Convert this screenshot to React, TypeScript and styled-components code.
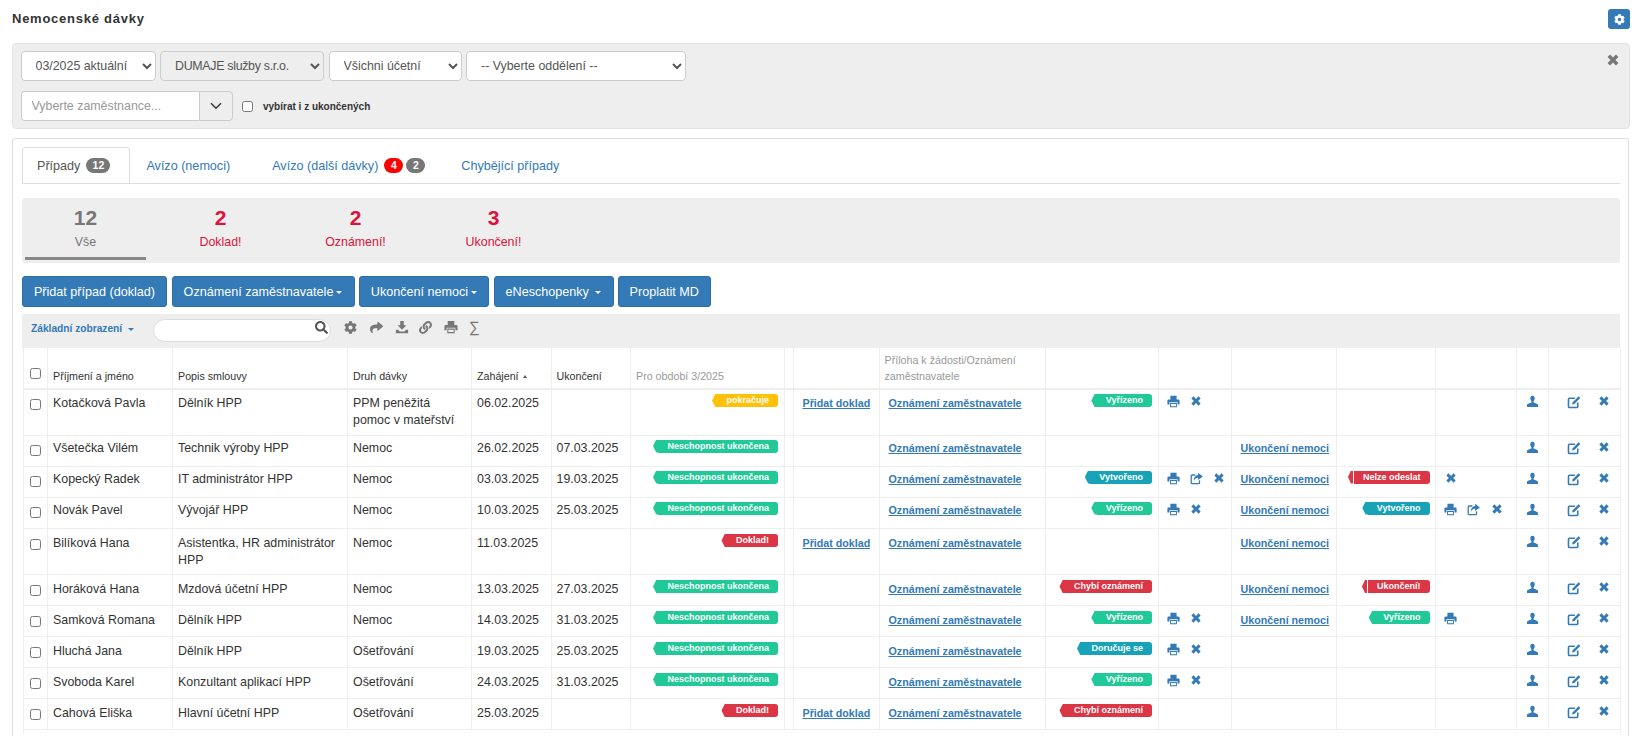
import React from "react";
import styled, { createGlobalStyle } from "styled-components";
import { FaCog, FaLink, FaSearch, FaShare } from "react-icons/fa";

const Global = createGlobalStyle`
  html, body { margin: 0; padding: 0; background: #fff; overflow: hidden; height: 736px; }
  body { font-family: "Liberation Sans", Arial, sans-serif; font-size: 12.4px; color: #333; }
  * { box-sizing: border-box; }
`;

const Page = styled.div`
  padding: 9px 9px 0 12px;
`;
const TitleBar = styled.header`
  display: flex;
  justify-content: space-between;
  height: 20px;
  margin-bottom: 14px;
`;
const Title = styled.h1`
  margin: 0;
  font-size: 13px;
  font-weight: bold;
  line-height: 20px;
  letter-spacing: 0.75px;
`;
const SettingsButton = styled.button`
  width: 22px;
  height: 20px;
  border: 0;
  padding: 0;
  border-radius: 3px;
  background: #337ab7;
  color: #fff;
  display: flex;
  align-items: center;
  justify-content: center;
  font-size: 11px;
`;
const FilterPanel = styled.section`
  position: relative;
  height: 86px;
  padding: 7px 8px 7px 7.5px;
  background: #eee;
  border: 1px solid #e3e3e3;
  border-radius: 4px;
  margin-bottom: 9px;
`;
const FilterRow = styled.div`
  display: flex;
  align-items: center;
  gap: 4.5px;
  height: 30px;
  & + & {
    margin-top: 10px;
  }
`;
const Select = styled.select<{ $w: number }>`
  width: ${(p) => p.$w}px;
  height: 30px;
  padding: 0 10px;
  font: 12.4px "Liberation Sans", Arial, sans-serif;
  color: #555;
  background-color: #fff;
  border: 1px solid #ccc;
  border-radius: 4px;
  &:disabled {
    background-color: #eee;
    opacity: 1;
    letter-spacing: -0.3px;
  }
`;
const Combo = styled.div`
  display: flex;
  width: 212px;
  height: 30px;
`;
const ComboInput = styled.input`
  width: 178px;
  height: 30px;
  padding: 0 10px;
  font: 12.4px "Liberation Sans", Arial, sans-serif;
  color: #555;
  border: 1px solid #ccc;
  border-right: 0;
  border-radius: 4px 0 0 4px;
  &::placeholder {
    color: #999;
    opacity: 1;
  }
`;
const ComboButton = styled.button`
  flex: 1;
  padding: 0;
  border: 1px solid #ccc;
  border-radius: 0 4px 4px 0;
  background: #eee;
  color: #333;
  display: flex;
  align-items: center;
  justify-content: center;
`;
const SmallCheck = styled.input`
  width: 11px;
  height: 11px;
  margin: 0;
`;
const CheckLabel = styled.label`
  display: flex;
  align-items: center;
  gap: 10px;
  margin-left: 5px;
  font-size: 10px;
  font-weight: bold;
`;
const CloseIcon = styled.span`
  position: absolute;
  top: 9px;
  right: 9px;
  color: #777;
  display: flex;
`;
const MainPanel = styled.section`
  border: 1px solid #ddd;
  border-bottom: 0;
  border-radius: 4px 4px 0 0;
  margin-right: 1px;
  padding: 8px 8px 0 9px;
  height: 598px;
`;
const Tabs = styled.nav`
  display: flex;
  height: 37px;
  border-bottom: 1px solid #ddd;
  font-size: 12.6px;
`;
const Tab = styled.a<{ $active?: boolean; $l: number; $r: number }>`
  display: flex;
  align-items: center;
  height: 36px;
  padding: 0 ${(p) => p.$r}px 0 ${(p) => p.$l}px;
  color: ${(p) => (p.$active ? "#555" : "#337ab7")};
  border: 1px solid ${(p) => (p.$active ? "#ddd" : "transparent")};
  border-bottom: 0;
  border-radius: 4px 4px 0 0;
  ${(p) => (p.$active ? "" : "border-left: 0; border-right: 0;")}
`;
const Badge = styled.span<{ $red?: boolean; $first?: boolean; $w?: number }>`
  margin-left: ${(p) => (p.$first ? 6 : 3)}px;
  width: ${(p) => p.$w ?? 19}px;
  height: 15px;
  border-radius: 8px;
  background: ${(p) => (p.$red ? "#f00" : "#777")};
  color: #fff;
  font-size: 10.5px;
  font-weight: bold;
  line-height: 15px;
  text-align: center;
`;
const Stats = styled.div`
  display: flex;
  gap: 14px;
  height: 65px;
  margin-top: 14px;
  padding-left: 3px;
  background: #eee;
  border-radius: 3px;
`;
const Stat = styled.div<{ $w: number; $active?: boolean }>`
  width: ${(p) => p.$w}px;
  height: 62px;
  padding-top: 7px;
  text-align: center;
  color: ${(p) => (p.$active ? "#777" : "#dc143c")};
  border-bottom: 3px solid ${(p) => (p.$active ? "#888" : "transparent")};
`;
const StatNumber = styled.div`
  font-size: 21px;
  font-weight: bold;
  line-height: 26px;
`;
const StatLabel = styled.div`
  margin-top: 3px;
  line-height: 17px;
`;
const Actions = styled.div`
  display: flex;
  gap: 4.5px;
  margin-top: 13px;
`;
const ActionButton = styled.button<{ $w: number }>`
  width: ${(p) => p.$w}px;
  height: 31px;
  padding: 0;
  border: 1px solid #2e6da4;
  border-radius: 3px;
  background: #337ab7;
  color: #fff;
  font: 12.6px "Liberation Sans", Arial, sans-serif;
  white-space: nowrap;
`;
const Caret = styled.span<{ $c?: string }>`
  display: inline-block;
  margin-left: 3px;
  vertical-align: middle;
  border-top: 3px solid ${(p) => p.$c ?? "#fff"};
  border-left: 3px solid transparent;
  border-right: 3px solid transparent;
`;
const SortCaret = styled.span`
  display: inline-block;
  margin-left: 1px;
  vertical-align: 2px;
  border-bottom: 3px solid #555;
  border-left: 2px solid transparent;
  border-right: 2px solid transparent;
`;
const Toolbar = styled.div`
  display: flex;
  align-items: flex-start;
  height: 34px;
  margin-top: 7px;
  padding: 5px 0 0 9px;
  background: #eee;
`;
const ViewMenu = styled.a`
  width: 122px;
  margin-top: 3px;
  color: #337ab7;
  font-size: 10.2px;
  font-weight: bold;
  line-height: 14px;
  white-space: nowrap;
`;
const SearchBox = styled.div`
  position: relative;
  width: 178px;
  height: 23px;
`;
const SearchInput = styled.input`
  width: 100%;
  height: 23px;
  background: #fff;
  border: 1px solid #ddd;
  border-radius: 12px;
`;
const SearchIcon = styled.span`
  position: absolute;
  top: 1.5px;
  right: 3.5px;
  display: flex;
  color: #555;
  font-size: 13px;
`;
const ToolIcons = styled.div`
  display: flex;
  align-items: center;
  margin-left: 12px;
  height: 16px;
  color: #777;
`;
const ToolIcon = styled.span<{ $w: number }>`
  display: flex;
  justify-content: center;
  width: ${(p) => p.$w}px;
  font-size: 13px;
  color: #777;
`;
const Sigma = styled.span`
  font-size: 15px;
  line-height: 16px;
  color: #777;
  margin-left: 8px;
`;
const Table = styled.table`
  table-layout: fixed;
  width: 1597px;
  margin-left: 0.5px;
  border-collapse: collapse;
`;
const Th = styled.th<{ $muted?: boolean }>`
  height: 41px;
  padding: 3px 5px 4px;
  vertical-align: bottom;
  text-align: left;
  font-size: 10.7px;
  font-weight: normal;
  line-height: 16px;
  color: ${(p) => (p.$muted ? "#999" : "#333")};
  border: 1px solid #eee;
  border-top: 0;
  border-bottom: 2px solid #eee;
`;
const Row = styled.tr<{ $tall?: boolean }>`
  height: ${(p) => (p.$tall ? 46 : 31)}px;
  &:nth-child(n + 5) {
    --shift: 1.5px;
  }
`;
const Td = styled.td`
  padding: calc(4.5px + var(--shift, 0px)) 5px 0;
  vertical-align: top;
  line-height: 17px;
  border: 1px solid #eee;
`;
const CheckCell = styled(Td)`
  padding: calc(5px + var(--shift, 0px)) 0 0 5px;
`;
const RowCheck = styled.input`
  display: block;
  width: 11px;
  height: 11px;
  margin: 4px 0 0 1px;
`;
const HeadCheck = styled.input`
  display: block;
  width: 11px;
  height: 11px;
  margin: 0 0 5px 1.5px;
`;
const TagCell = styled(Td)`
  padding: calc(4px + var(--shift, 0px)) 5.5px 0 0;
  text-align: right;
  line-height: 13px;
`;
const LinkCell = styled(Td)`
  padding-left: 9px;
  padding-right: 0;
  white-space: nowrap;
`;
const Link = styled.a`
  color: #337ab7;
  font-size: 10.7px;
  font-weight: bold;
  text-decoration: underline;
`;
const IconCell = styled(Td)`
  padding: calc(5px + var(--shift, 0px)) 0 0 3px;
`;
const IconRow = styled.div`
  display: flex;
  height: 14px;
`;
const IconSlot = styled.span<{ $w?: number }>`
  display: flex;
  justify-content: center;
  width: ${(p) => p.$w ?? 23}px;
  color: #337ab7;
`;
const Tag = styled.span<{ $bg: string; $split?: boolean }>`
  position: relative;
  display: inline-block;
  height: 13px;
  margin-left: 6px;
  padding: 0 9px;
  border-radius: 0 3px 3px 0;
  background: ${(p) => p.$bg};
  color: #fff;
  font-size: 9px;
  font-weight: bold;
  line-height: 12px;
  white-space: nowrap;
  vertical-align: top;
  &::before {
    content: "";
    position: absolute;
    top: 0;
    bottom: 0;
    left: ${(p) => (p.$split ? "-6px" : "-5.5px")};
    width: ${(p) => (p.$split ? "5.5px" : "6px")};
    background: ${(p) => p.$bg};
    clip-path: polygon(100% 0, 100% 100%, 55% 100%, 0 50%, 55% 0);
  }
`;
const FootRow = styled.tr`
  height: 5px;
`;
const FootCell = styled.td`
  border-left: 1px solid #eee;
  border-right: 1px solid #eee;
`;

const paths: Record<string, React.ReactNode> = {
  remove: <path d="M1.8 4.6 4.6 1.8 8 5.2 11.4 1.8 14.2 4.6 10.8 8 14.2 11.4 11.4 14.2 8 10.8 4.6 14.2 1.8 11.4 5.2 8Z" />,
  user: <path d="M8 .8C9.9.8 10.7 2.3 10.7 3.9 10.7 5.5 10 6.8 9.3 7.6V9C9.3 9.8 14.8 10.5 14.8 12.6V14.8H1.2V12.6C1.2 10.5 6.7 9.8 6.7 9V7.6C6 6.8 5.3 5.5 5.3 3.9 5.3 2.3 6.1.8 8 .8Z" />,
  print: (
    <path
      fillRule="evenodd"
      d="M4.2 1H11.8V5.6H14Q15.5 5.6 15.5 7V11.6H13V8.8H3V11.6H.5V7Q.5 5.6 2 5.6H4.2ZM3.8 9.8H12.2V15H3.8ZM5 11V13.8H11V11Z"
    />
  ),
  share: (
    <>
      <path d="M6.5 3.7H2.7Q1.5 3.7 1.5 4.9V13.1Q1.5 14.3 2.7 14.3H10.5Q11.7 14.3 11.7 13.1V10" fill="none" stroke="currentColor" strokeWidth="1.6" />
      <path d="M10 1 15.8 5.4 10 9.8V7.2C7.6 7.2 5.8 8.2 4.6 11 4.6 6.8 6.6 4.2 10 3.7Z" />
    </>
  ),
  edit: (
    <>
      <path d="M12.3 8.5V13.1Q12.3 14.3 11.1 14.3H2.9Q1.7 14.3 1.7 13.1V4.9Q1.7 3.7 2.9 3.7H9" fill="none" stroke="currentColor" strokeWidth="1.8" />
      <path d="M13.3 1.5 15.2 3.4 8.4 10.2 5.9 10.8 6.5 8.3Z" />
    </>
  ),
  save: <path d="M6 1H10V6H13L8 11 3 6H6ZM1 11H3.4L5.4 13H10.6L12.6 11H15V15H1Z" />,
};

const Glyph = ({ n, s = 13 }: { n: string; s?: number }) => (
  <svg width={s} height={s} viewBox="0 0 16 16" fill="currentColor">
    {paths[n]}
  </svg>
);

const Icons = ({ list }: { list?: string }) => (
  <IconCell>
    {list && (
      <IconRow>
        {list.split(",").map((n, i) => (
          <IconSlot key={i}>
            <Glyph n={n} s={n === "remove" ? 12 : 13} />
          </IconSlot>
        ))}
      </IconRow>
    )}
  </IconCell>
);

const GREEN = "#20c997";
const TEAL = "#17a2b8";
const RED = "#dc3545";
const YELLOW = "#ffc107";
type TagDef = [string, string, boolean?];
const NES: TagDef = ["Neschopnost ukončena", GREEN];
const DOK: TagDef = ["Doklad!", RED];
const VYR: TagDef = ["Vyřízeno", GREEN];
const VYT: TagDef = ["Vytvořeno", TEAL];
const CHY: TagDef = ["Chybí oznámení", RED];

type RowDef = {
  name: string;
  job: string;
  kind: string;
  from: string;
  to?: string;
  period: TagDef;
  add?: boolean;
  st?: TagDef;
  stIcons?: string;
  end?: boolean;
  endTag?: TagDef;
  endIcons?: string;
  tall?: boolean;
};

const rows: RowDef[] = [
  { name: "Kotačková Pavla", job: "Dělník HPP", kind: "PPM peněžitá pomoc v mateřství", from: "06.02.2025", period: ["pokračuje", YELLOW], add: true, st: VYR, stIcons: "print,remove", tall: true },
  { name: "Všetečka Vilém", job: "Technik výroby HPP", kind: "Nemoc", from: "26.02.2025", to: "07.03.2025", period: NES, end: true },
  { name: "Kopecký Radek", job: "IT administrátor HPP", kind: "Nemoc", from: "03.03.2025", to: "19.03.2025", period: NES, st: VYT, stIcons: "print,share,remove", end: true, endTag: ["Nelze odeslat", RED, true], endIcons: "remove" },
  { name: "Novák Pavel", job: "Vývojář HPP", kind: "Nemoc", from: "10.03.2025", to: "25.03.2025", period: NES, st: VYR, stIcons: "print,remove", end: true, endTag: VYT, endIcons: "print,share,remove" },
  { name: "Bilíková Hana", job: "Asistentka, HR administrátor HPP", kind: "Nemoc", from: "11.03.2025", period: DOK, add: true, end: true, tall: true },
  { name: "Horáková Hana", job: "Mzdová účetní HPP", kind: "Nemoc", from: "13.03.2025", to: "27.03.2025", period: NES, st: CHY, end: true, endTag: ["Ukončení!", RED, true] },
  { name: "Samková Romana", job: "Dělník HPP", kind: "Nemoc", from: "14.03.2025", to: "31.03.2025", period: NES, st: VYR, stIcons: "print,remove", end: true, endTag: VYR, endIcons: "print" },
  { name: "Hluchá Jana", job: "Dělník HPP", kind: "Ošetřování", from: "19.03.2025", to: "25.03.2025", period: NES, st: ["Doručuje se", TEAL], stIcons: "print,remove" },
  { name: "Svoboda Karel", job: "Konzultant aplikací HPP", kind: "Ošetřování", from: "24.03.2025", to: "31.03.2025", period: NES, st: VYR, stIcons: "print,remove" },
  { name: "Cahová Eliška", job: "Hlavní účetní HPP", kind: "Ošetřování", from: "25.03.2025", period: DOK, add: true, st: CHY },
];

const widths = [24.5, 125, 175, 124, 79.5, 79.5, 153.5, 9, 86, 166, 113, 73, 105.5, 99, 81, 32, 71.5];

const TagView = ({ t }: { t?: TagDef }) => (
  <TagCell>{t && <Tag $bg={t[1]} $split={t[2]}>{t[0]}</Tag>}</TagCell>
);

export default function App() {
  return (
    <Page>
      <Global />
      <TitleBar>
        <Title>Nemocenské dávky</Title>
        <SettingsButton aria-label="Nastavení">
          <FaCog />
        </SettingsButton>
      </TitleBar>
      <FilterPanel>
        <FilterRow>
          <Select $w={135} defaultValue="a">
            <option value="a">03/2025 aktuální</option>
          </Select>
          <Select $w={164} disabled defaultValue="a">
            <option value="a">DUMAJE služby s.r.o.</option>
          </Select>
          <Select $w={133} defaultValue="a">
            <option value="a">Všichni účetní</option>
          </Select>
          <Select $w={220} defaultValue="a">
            <option value="a">-- Vyberte oddělení --</option>
          </Select>
        </FilterRow>
        <FilterRow>
          <Combo>
            <ComboInput placeholder="Vyberte zaměstnance..." />
            <ComboButton aria-label="Rozbalit">
              <svg width="12" height="8" viewBox="0 0 12 8" fill="none" stroke="#333" strokeWidth="1.4">
                <path d="M1 1.2 6 6.2 11 1.2" />
              </svg>
            </ComboButton>
          </Combo>
          <CheckLabel>
            <SmallCheck type="checkbox" />
            vybírat i z ukončených
          </CheckLabel>
        </FilterRow>
        <CloseIcon>
          <Glyph n="remove" s={14} />
        </CloseIcon>
      </FilterPanel>
      <MainPanel>
        <Tabs>
          <Tab $active $l={14} $r={19}>
            Případy<Badge $first $w={24}>12</Badge>
          </Tab>
          <Tab $l={16} $r={42}>Avízo (nemoci)</Tab>
          <Tab $l={0} $r={36}>
            Avízo (další dávky)<Badge $first $red>4</Badge>
            <Badge>2</Badge>
          </Tab>
          <Tab $l={0} $r={0}>Chybějící případy</Tab>
        </Tabs>
        <Stats>
          <Stat $w={121} $active>
            <StatNumber>12</StatNumber>
            <StatLabel>Vše</StatLabel>
          </Stat>
          <Stat $w={121}>
            <StatNumber>2</StatNumber>
            <StatLabel>Doklad!</StatLabel>
          </Stat>
          <Stat $w={121}>
            <StatNumber>2</StatNumber>
            <StatLabel>Oznámení!</StatLabel>
          </Stat>
          <Stat $w={127}>
            <StatNumber>3</StatNumber>
            <StatLabel>Ukončení!</StatLabel>
          </Stat>
        </Stats>
        <Actions>
          <ActionButton $w={145}>Přidat případ (doklad)</ActionButton>
          <ActionButton $w={183}>
            Oznámení zaměstnavatele<Caret />
          </ActionButton>
          <ActionButton $w={130}>
            Ukončení nemoci<Caret />
          </ActionButton>
          <ActionButton $w={120}>
            eNeschopenky <Caret />
          </ActionButton>
          <ActionButton $w={92.5}>Proplatit MD</ActionButton>
        </Actions>
        <Toolbar>
          <ViewMenu>
            Základní zobrazení <Caret $c="#337ab7" />
          </ViewMenu>
          <SearchBox>
            <SearchInput />
            <SearchIcon>
              <FaSearch />
            </SearchIcon>
          </SearchBox>
          <ToolIcons>
            <ToolIcon $w={14}><FaCog /></ToolIcon>
            <ToolIcon $w={38}><FaShare /></ToolIcon>
            <ToolIcon $w={14}><Glyph n="save" s={14} /></ToolIcon>
            <ToolIcon $w={32}><FaLink /></ToolIcon>
            <ToolIcon $w={20}><Glyph n="print" s={14} /></ToolIcon>
            <Sigma>∑</Sigma>
          </ToolIcons>
        </Toolbar>
        <Table>
          <colgroup>
            {widths.map((w, i) => (
              <col key={i} style={{ width: w }} />
            ))}
          </colgroup>
          <thead>
            <tr>
              <Th>
                <HeadCheck type="checkbox" />
              </Th>
              <Th>Příjmení a jméno</Th>
              <Th>Popis smlouvy</Th>
              <Th>Druh dávky</Th>
              <Th>
                Zahájení <SortCaret />
              </Th>
              <Th>Ukončení</Th>
              <Th $muted>Pro období 3/2025</Th>
              <Th />
              <Th />
              <Th $muted>Příloha k žádosti/Oznámení zaměstnavatele</Th>
              <Th />
              <Th />
              <Th />
              <Th />
              <Th />
              <Th />
              <Th />
            </tr>
          </thead>
          <tbody>
            {rows.map((r) => (
              <Row key={r.name} $tall={r.tall}>
                <CheckCell>
                  <RowCheck type="checkbox" />
                </CheckCell>
                <Td>{r.name}</Td>
                <Td>{r.job}</Td>
                <Td>{r.kind}</Td>
                <Td>{r.from}</Td>
                <Td>{r.to}</Td>
                <TagView t={r.period} />
                <Td />
                <LinkCell>{r.add && <Link>Přidat doklad</Link>}</LinkCell>
                <LinkCell>
                  <Link>Oznámení zaměstnavatele</Link>
                </LinkCell>
                <TagView t={r.st} />
                <Icons list={r.stIcons} />
                <LinkCell>{r.end && <Link>Ukončení nemoci</Link>}</LinkCell>
                <TagView t={r.endTag} />
                <Icons list={r.endIcons} />
                <IconCell>
                  <IconRow>
                    <IconSlot $w={24}>
                      <Glyph n="user" />
                    </IconSlot>
                  </IconRow>
                </IconCell>
                <IconCell>
                  <IconRow>
                    <IconSlot $w={44}>
                      <Glyph n="edit" s={14} />
                    </IconSlot>
                    <IconSlot $w={16}>
                      <Glyph n="remove" s={12} />
                    </IconSlot>
                  </IconRow>
                </IconCell>
              </Row>
            ))}
            <FootRow>
              <FootCell colSpan={17} />
            </FootRow>
          </tbody>
        </Table>
      </MainPanel>
    </Page>
  );
}
